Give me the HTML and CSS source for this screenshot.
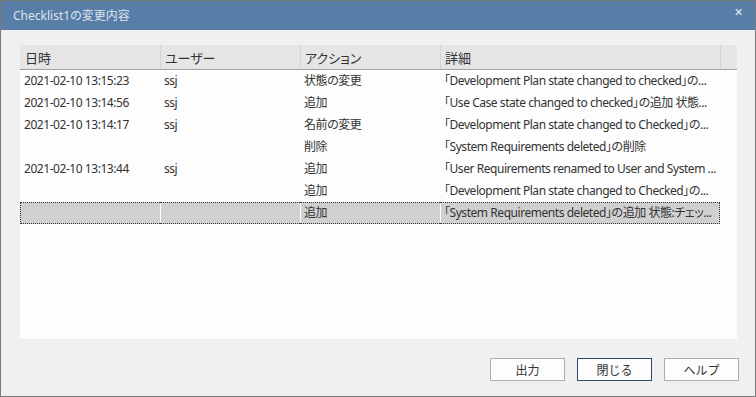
FILE: index.html
```html
<!DOCTYPE html>
<html lang="ja">
<head>
    <meta charset="UTF-8">
    <title>Checklist1の変更内容</title>
    <link rel="stylesheet" href="styles.css">
</head>
<body>
    <div class="dialog">
        <div class="titlebar">
            <span class="title">Checklist1の変更内容</span>
            <span class="close">✕</span>
        </div>
        <div class="content">
            <div class="grid">
                <table class="history">
                    <colgroup>
                        <col class="c-date">
                        <col class="c-user">
                        <col class="c-action">
                        <col class="c-detail">
                        <col class="c-fill">
                    </colgroup>
                    <thead>
                        <tr>
                            <th>日時</th>
                            <th>ユーザー</th>
                            <th>アクション</th>
                            <th>詳細</th>
                            <th></th>
                        </tr>
                    </thead>
                    <tbody>
                        <tr>
                            <td>2021-02-10 13:15:23</td>
                            <td>ssj</td>
                            <td>状態の変更</td>
                            <td>「Development Plan state changed to checked」の...</td>
                            <td></td>
                        </tr>
                        <tr>
                            <td>2021-02-10 13:14:56</td>
                            <td>ssj</td>
                            <td>追加</td>
                            <td>「Use Case state changed to checked」の追加 状態...</td>
                            <td></td>
                        </tr>
                        <tr>
                            <td>2021-02-10 13:14:17</td>
                            <td>ssj</td>
                            <td>名前の変更</td>
                            <td>「Development Plan state changed to Checked」の...</td>
                            <td></td>
                        </tr>
                        <tr>
                            <td></td>
                            <td></td>
                            <td>削除</td>
                            <td>「System Requirements deleted」の削除</td>
                            <td></td>
                        </tr>
                        <tr>
                            <td>2021-02-10 13:13:44</td>
                            <td>ssj</td>
                            <td>追加</td>
                            <td>「User Requirements renamed to User and System ...</td>
                            <td></td>
                        </tr>
                        <tr>
                            <td></td>
                            <td></td>
                            <td>追加</td>
                            <td>「Development Plan state changed to Checked」の...</td>
                            <td></td>
                        </tr>
                        <tr class="selected">
                            <td></td>
                            <td></td>
                            <td>追加</td>
                            <td class="last">「System Requirements deleted」の追加 状態:チェッ...</td>
                            <td class="fill"></td>
                        </tr>
                    </tbody>
                </table>
            </div>
            <div class="buttons">
                <button>出力</button>
                <button class="default">閉じる</button>
                <button>ヘルプ</button>
            </div>
        </div>
    </div>
</body>
</html>
```

FILE: styles.css
```css
body {
    margin: 0;
    font-family: "Noto Sans", "Noto Sans CJK JP", sans-serif;
    font-size: 12px;
    color: #333;
    font-feature-settings: "palt";
}

.dialog {
    width: 756px;
    height: 397px;
    box-sizing: border-box;
    border: 1px solid #7a7a7a;
    background-color: #f0f0f0;
    display: flex;
    flex-direction: column;
}

.titlebar {
    height: 29px;
    background-color: #587da6;
    color: #dde4ee;
    display: flex;
    align-items: center;
    justify-content: space-between;
    padding: 0 12px 0 12px;
    flex-shrink: 0;
}

.title {
    font-size: 12px;
    margin-top: -2px;
}

.close {
    font-size: 11px;
    margin-top: -8px;
    color: #e8edf4;
}

.content {
    flex: 1;
    padding: 15px 16px 0 19px;
    display: flex;
    flex-direction: column;
}

/* 一覧 */
.grid {
    width: 717px;
    height: 294px;
    background-color: #fdfdfd;
}

.history {
    border-collapse: separate;
    border-spacing: 0;
    table-layout: fixed;
    width: 717px;
}

.c-date, .c-user, .c-action {
    width: 140px;
}

.c-detail {
    width: 280px;
}

.history th {
    height: 25px;
    padding: 0 5px;
    background-color: #e5e5e5;
    border-bottom: 1px solid #a0a0a0;
    box-shadow: inset 1px 0 0 #d5d5d5;
    font-weight: normal;
    text-align: left;
    font-size: 13px;
    box-sizing: border-box;
}

.history th:first-child {
    box-shadow: none;
}

.history td {
    height: 22px;
    padding: 0 4px;
    white-space: nowrap;
    overflow: hidden;
    text-overflow: ellipsis;
    line-height: 20px;
    letter-spacing: -0.45px;
    border-top: 1px solid transparent;
    border-bottom: 1px solid transparent;
    box-sizing: border-box;
}

/* 選択行 */
.history tr.selected td {
    background-color: #d0d0d0;
    border-top: 1px dotted #333;
    border-bottom: 1px dotted #333;
    box-shadow: inset 1px 0 0 #fdfdfd;
}

.history tr.selected td:first-child {
    border-left: 1px dotted #333;
    box-shadow: none;
}

.history tr.selected td.last {
    border-right: 1px dotted #333;
}

.history tr.selected td.fill {
    background-color: #fdfdfd;
    border: none;
    box-shadow: none;
}

/* ボタン */
.buttons {
    display: flex;
    justify-content: flex-end;
    gap: 12px;
    margin-top: 19px;
}

button {
    width: 75px;
    height: 23px;
    background-color: #fdfdfd;
    border: 1px solid #adadad;
    font-family: "Noto Sans CJK JP", sans-serif;
    font-size: 12px;
    color: #333;
    padding: 0;
}

button.default {
    border-color: #2c4a6e;
}
```
